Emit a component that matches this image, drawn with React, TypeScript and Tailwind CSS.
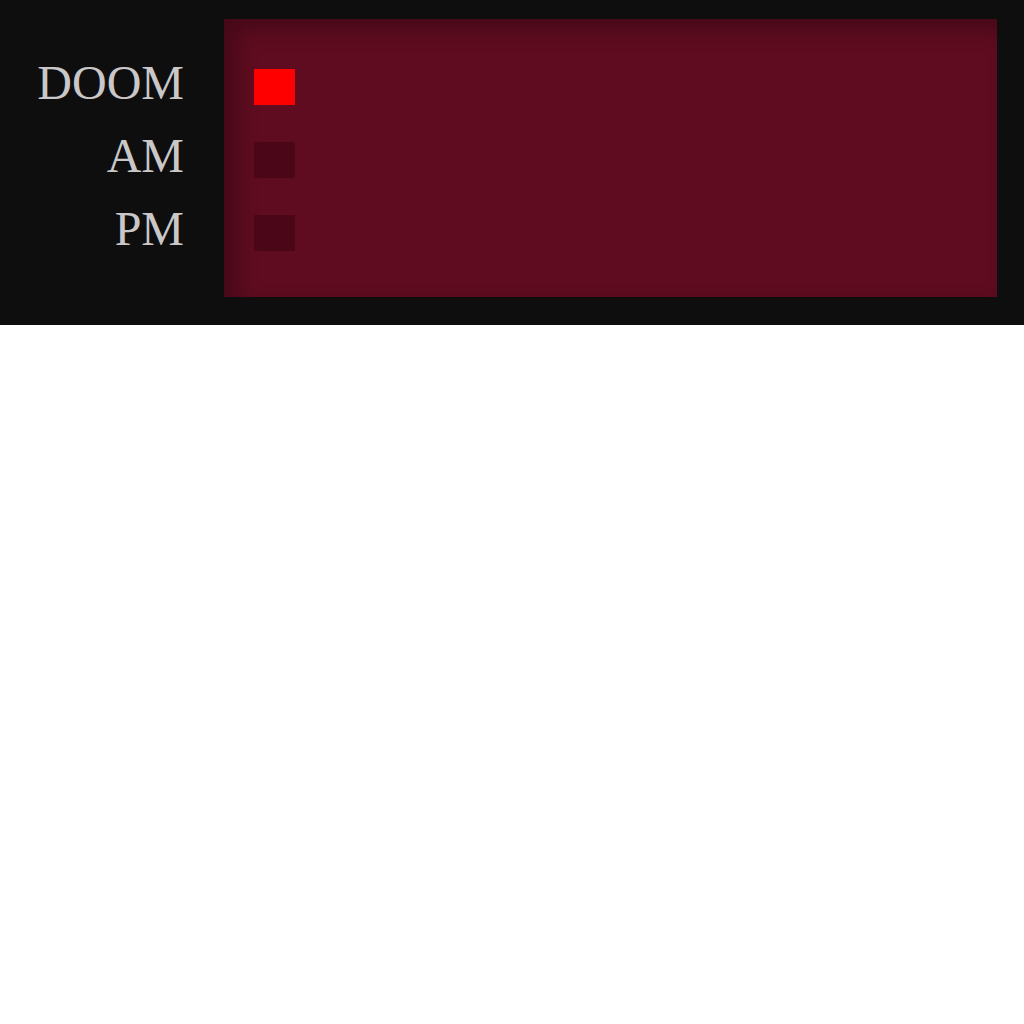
const rows = [
  { label: "DOOM", on: true },
  { label: "AM", on: false },
  { label: "PM", on: false },
];

export default function App() {
  return (
    <div className="flex bg-[#0f0e0f] h-[325px] w-full">
      <div className="w-[184px] pt-[65px] flex flex-col gap-[37px] text-right">
        {rows.map((r) => (
          <div
            key={r.label}
            className="h-[36px] leading-[36px] text-[48px] text-[#c9c7c8] [font-family:'Liberation_Serif',serif]"
          >
            {r.label}
          </div>
        ))}
      </div>
      <div className="ml-[40px] mt-[19px] w-[773px] h-[278px] bg-[#5f0c20] shadow-[inset_12px_10px_22px_rgba(0,0,0,0.28)] pt-[50px] pl-[30px] flex flex-col gap-[37px]">
        {rows.map((r) => (
          <div
            key={r.label}
            className={
              r.on
                ? "w-[41px] h-[36px] bg-[#ff0000]"
                : "w-[41px] h-[36px] bg-[#4b0718]"
            }
          />
        ))}
      </div>
    </div>
  );
}
